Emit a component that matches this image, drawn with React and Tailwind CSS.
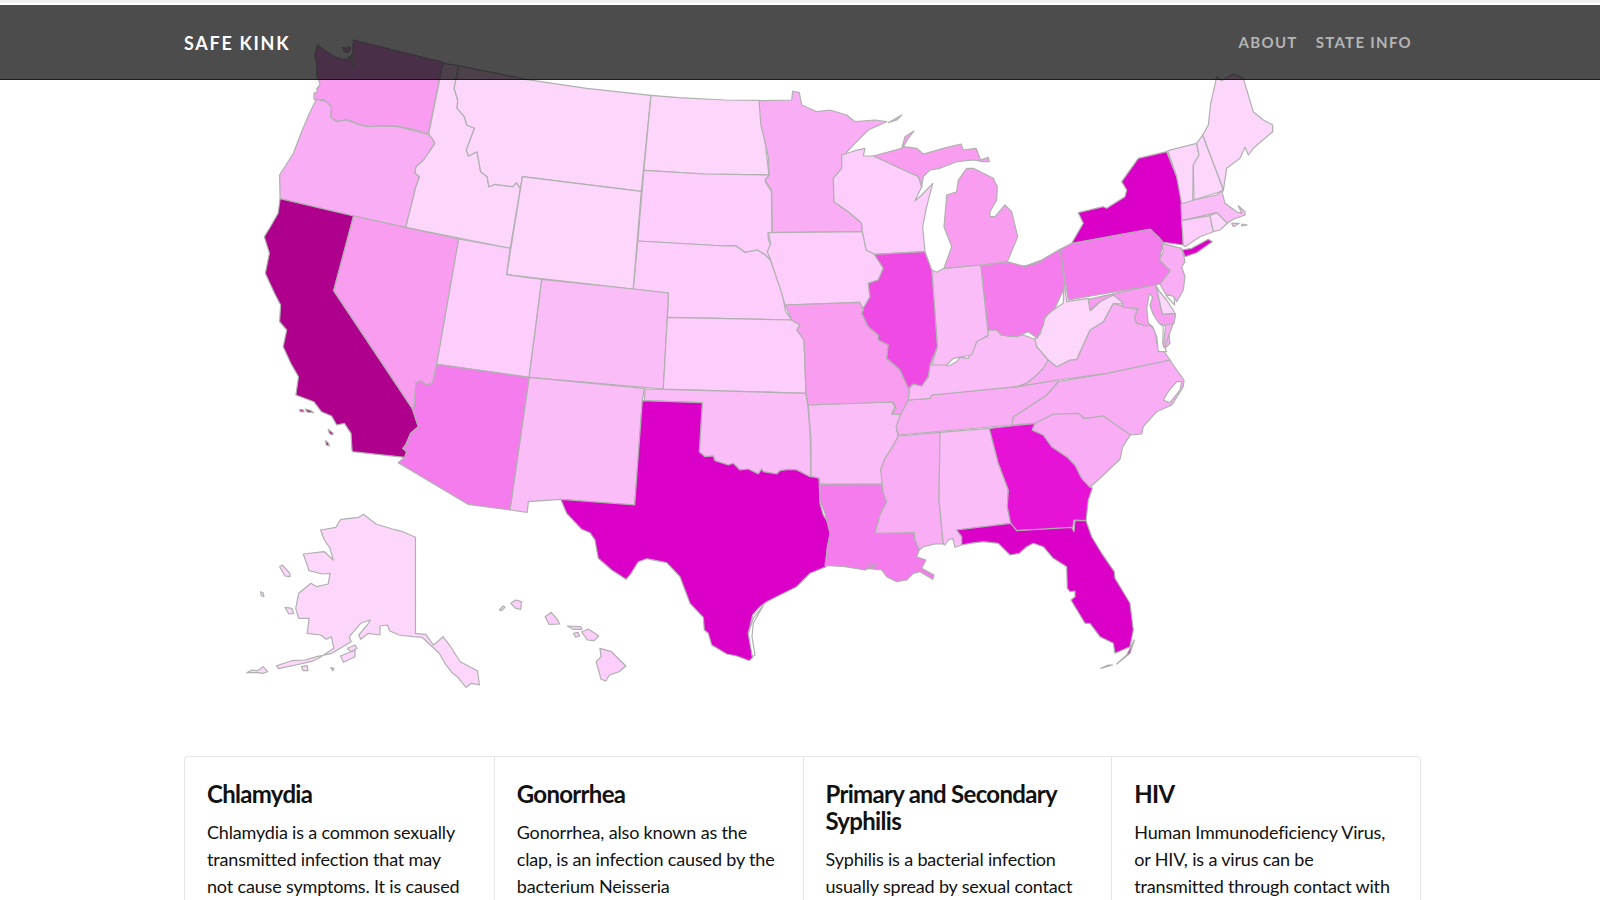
const frames = {
  a: [0, 0, 1.96, 3],
  c: [200, 400, 2.613, 3],
  d: [780, 400, 3, 3],
  e: [1000, 60, 3, 3],
  f: [740, 80, 3, 3],
  g: [780, 280, 3, 3],
  h: [540, 370, 3, 3],
  i: [300, 30, 3, 3],
};

// outlines were traced off zoomed crops, a letter switches to that crop's coordinates
const toPath = (src) => {
  let f = frames.a;
  const out = [];
  src.trim().split(/\s+/).forEach((tok) => {
    if (frames[tok]) {
      f = frames[tok];
      return;
    }
    const [x, y] = tok.split(',').map(Number);
    out.push(`${(f[0] + x / f[2]).toFixed(1)} ${(f[1] + y / f[3]).toFixed(1)}`);
  });
  return 'M' + out.join('L') + 'Z';
};

const c1 = '#ae008c';
const c2 = '#db00c8';
const c3 = '#e612d6';
const c4 = '#ef4ae3';
const c5 = '#f47cec';
const c6 = '#f89df0';
const c7 = '#f9adf5';
const c8 = '#fbbdf8';
const c9 = '#fdcdfb';
const c10 = '#fdd6fc';

const states = [
  [c6, 'i 52,45 60,50 72,60 100,78 125,88 140,88 150,85 145,80 155,92 160,108 165,110 160,88 150,80 158,72 160,30 430,97 418,150 385,312 340,298 290,288 240,287 215,292 195,285 180,285 160,275 135,268 125,275 105,272 92,262 93,235 85,222 70,208 55,212 42,208 42,190 52,185 50,175 60,165 58,155 50,135 50,100 45,75'],
  [c6, 'i 128,52 140,55 150,50 152,58 143,68 133,65'],
  [c10, 'a 868,190 899,197 890,265 897,300 896,325 910,350 915,375 930,385 914,450 918,468 935,455 942,515 955,530 958,560 970,553 1005,560 1012,548 1020,565 1000,745 795,682 815,560 822,530 813,520 815,500 830,480 852,430 848,418 840,403'],
  [c10, 'a 899,197 1030,238 1150,265 1276,286 1257,574 1024,530 1020,565 1012,548 1005,560 970,553 958,560 955,530 942,515 935,455 918,468 914,450 930,385 915,375 910,350 896,325 897,300 890,265'],
  [c10, 'a 1276,286 1330,293 1420,300 1489,301 1495,335 1492,380 1498,400 1503,470 1507,525 1380,522 1262,511'],
  [c9, 'a 1262,511 1380,522 1507,525 1500,545 1512,575 1513,697 1505,700 1506,720 1511,735 1510,780 1500,765 1485,750 1460,757 1442,737 1420,738 1250,723'],
  [c9, 'a 1250,723 1420,738 1442,737 1460,757 1485,750 1500,765 1510,780 1520,820 1532,870 1537,912 1540,935 1552,960 1308,952 1310,879 1241,867'],
  [c10, 'a 1024,530 1257,574 1241,867 993,824'],
  [c7, 'a 620,298 640,305 650,322 648,350 660,365 680,360 705,375 720,380 745,378 780,380 840,403 848,418 852,430 830,480 815,500 813,520 822,530 815,560 795,682 693,648 549,596 548,525 575,460 590,400 605,345'],
  [c1, 'a 549,596 693,648 654,872 808,1225 820,1280 805,1300 795,1335 c 545,125 530,145 540,155 535,172 398,155 a 690,1350 688,1300 675,1270 660,1275 650,1248 630,1235 615,1205 580,1185 585,1130 570,1090 555,1040 562,990 548,965 550,915 538,880 520,820 528,760 518,710 530,680 545,640'],
  [c1, 'c 260,28 270,30 272,36 262,35'],
  [c1, 'c 275,27 290,32 297,38 280,36'],
  [c1, 'c 335,88 348,100 345,105 338,100'],
  [c1, 'c 328,122 335,128 338,138 330,135'],
  [c6, 'a 693,648 899,717 856,1093 848,1150 835,1155 825,1142 815,1150 812,1222 808,1225 654,872'],
  [c9, 'a 899,717 1000,745 993,824 1062,838 1037,1132 856,1093'],
  [c8, 'a 1062,838 1241,867 1310,879 1308,952 1300,1167 1037,1132'],
  [c9, 'a 1308,952 g 35,120 60,135 50,150 72,180 78,340 a 1300,1167'],
  [c8, 'a 1037,1132 1263,1165 h 307,92 284,405 62,388 c 858,305 855,337 810,330'],
  [c5, 'a 856,1093 1037,1132 c 810,330 700,313 518,188 535,172 540,155 530,145 545,125 a 795,1335 805,1300 820,1280 808,1225 812,1222 815,1150 825,1142 835,1155 848,1150'],
  [c8, 'h 315,57 797,70 803,105 810,180 813,322 810,320 770,300 745,298 720,302 710,312 670,305 665,297 655,312 625,297 600,300 580,280 565,285 525,272 520,258 495,260 478,245 487,98 313,92'],
  [c2, 'h 307,92 487,98 478,245 495,260 520,258 525,272 565,285 580,280 600,300 625,297 655,312 665,297 670,305 710,312 720,302 745,298 770,300 810,320 837,322 840,400 850,435 865,460 872,490 862,530 858,590 810,610 770,650 720,675 680,695 660,710 638,735 625,790 635,840 638,862 628,872 590,858 560,852 515,825 505,790 493,780 490,742 450,700 420,620 380,578 320,566 295,575 270,615 258,628 215,600 175,565 165,510 150,488 125,478 80,430 62,388 284,405'],
  ['#ffffff', 'h 670,706 640,745 625,790 637,860 645,855 636,800 640,760 665,715'],
  [c8, 'd 85,15 335,6 345,20 335,40 365,42 350,90 355,108 335,145 315,175 302,210 310,240 305,252 120,253 118,235 93,228 93,120'],
  [c5, 'd 120,253 305,252 310,280 320,305 300,345 285,400 403,398 405,420 418,450 410,470 438,480 425,505 462,525 458,538 420,515 400,520 380,540 350,545 320,530 305,510 260,505 265,495 290,495 255,510 195,500 150,497 135,497 143,440 150,400 135,340 120,300'],
  [c7, 'd 355,108 480,97 477,300 490,432 465,432 430,440 418,450 405,420 403,398 285,400 300,345 320,305 310,280 302,210 315,175 335,145'],
  [c8, 'd 480,97 628,85 655,190 685,270 682,320 692,370 530,390 545,410 545,435 525,442 518,415 505,420 495,435 490,432 477,300'],
  [c3, 'd 628,85 765,70 757,90 790,105 815,140 860,170 885,195 905,235 937,265 925,300 918,362 882,360 878,385 710,392 692,370 682,320 685,270 655,190'],
  [c2, 'd 530,390 692,370 710,392 875,382 882,395 885,362 918,362 935,410 965,460 1003,515 1005,535 1050,610 1060,690 1050,740 1005,760 1000,730 960,710 930,670 915,670 885,620 873,600 885,590 885,573 870,575 862,565 860,500 820,475 790,440 760,430 740,440 718,460 690,465 655,430 610,425 570,430 545,435 545,410'],
  [c2, 'd 1063,720 1050,760 1010,792 1040,765'],
  [c2, 'd 962,805 985,795 998,795 970,803'],
  [c7, 'd 765,70 820,42 895,38 912,55 970,48 1052,103 1028,140 1020,178 960,235 930,262 905,235 885,195 860,170 815,140 790,105 757,90'],
  [c7, 'g 695,435 700,410 740,385 800,345 835,305 980,280 1170,240 1190,270 1212,300 1210,320 1185,360 1175,375 1130,395 1090,440 1085,462 1052,465 970,408 912,415 895,400 820,402 765,430'],
  ['#ffffff', 'g 1165,335 1190,305 1205,305 1200,330 1170,368 1150,360'],
  [c7, 'g 355,465 348,440 362,403 385,360 450,355 455,345 710,320 835,300 835,305 800,345 740,385 700,410 695,435'],
  [c8, 'g 385,360 388,325 400,312 425,318 445,290 450,255 480,250 505,258 530,245 540,232 565,235 575,210 595,180 622,170 625,150 650,150 665,165 690,170 730,165 765,178 770,200 805,240 790,265 765,290 740,310 710,320 455,345 450,355'],
  [c7, 'g 740,310 765,290 790,265 805,240 830,260 870,240 890,238 930,150 970,125 1000,70 1035,80 1075,90 1065,125 1110,135 1125,150 1130,190 1150,210 1170,240 980,280 835,300 710,320'],
  [c7, 'g 1150,195 1165,145 1170,190 1155,205'],
  [c10, 'g 765,178 782,160 785,130 805,100 850,70 852,0 860,65 925,55 932,92 965,60 1000,45 1028,58 1030,72 1000,70 970,125 930,150 890,238 870,240 830,260 805,240 770,200'],
  [c6, 'e 265,718 467,673 487,762 527,762 522,790 495,797 478,790 462,795 440,798 410,790 403,770 415,745 370,742 365,725 340,705 300,725 270,750'],
  ['#ffffff', 'e 448,700 458,712 450,735 458,760 470,780 478,790 490,800 488,850 500,875 475,875 470,830 458,800 445,790 440,745'],
  [c7, 'e 490,860 497,795 520,790 505,830 495,860'],
  [c10, 'e 467,673 475,690 500,720 525,760 487,762'],
  ['#ffffff', 'e 497,705 522,708 524,735'],
  [c7, 'e 485,550 545,565 555,605 545,620 555,650 550,690 530,725 522,710 495,700 480,672 510,632 478,600 490,575'],
  [c5, 'e 215,550 450,507 475,530 490,547 478,600 510,632 480,672 205,720 180,568'],
  [c2, 'e 215,550 250,490 235,458 310,440 320,445 375,410 380,390 365,365 415,295 500,275 530,350 543,400 550,555 490,547 475,530 450,507'],
  [c2, 'e 547,570 555,590 590,578 637,545 625,538 575,565'],
  [c10, 'e 503,272 590,250 597,285 580,315 578,425 545,432 530,350'],
  [c10, 'e 590,250 608,225 665,375 670,392 582,420 580,315 597,285'],
  [c10, 'e 608,225 625,195 632,130 650,50 665,62 700,42 730,55 760,155 790,180 818,195 818,215 760,265 745,285 735,262 720,295 680,325 670,392 665,375'],
  [c8, 'e 543,432 582,420 650,405 665,392 675,430 710,455 725,460 715,437 735,455 735,465 700,478 682,490 650,458 545,482'],
  [c9, 'e 545,482 630,467 640,515 600,530 555,560 550,555'],
  [c10, 'e 630,467 650,458 682,490 660,510 640,515'],
  [c8, 'e 695,490 718,490 700,500'],
  [c8, 'e 725,492 742,495 725,498'],
  [c5, 'f 722,558 800,545 850,558 900,548 e 70,620 125,600 180,568 192,660 190,690 165,745 135,770 130,795 112,835 85,815 50,830 0,825 g 665,165 650,150 625,150'],
  [c8, 'f 575,570 590,577 612,565 722,555 745,765 710,785 695,825 640,835 620,855 575,855 592,800 585,700'],
  [c6, 'f 612,565 635,500 612,440 620,345 650,335 655,300 680,265 700,265 760,295 772,320 770,360 750,395 750,410 765,410 795,375 815,395 833,470 825,490 802,545 722,555'],
  [c6, 'f 400,228 485,205 495,170 522,153 505,175 490,200 530,205 550,222 610,205 663,192 670,210 708,205 722,240 745,232 748,245 730,245 700,240 650,245 600,265 570,270 550,290 545,320 535,290'],
  [c7, 'f 57,62 155,60 158,33 178,38 185,75 230,95 270,90 320,105 345,125 405,120 440,125 385,150 345,190 315,222 305,225 305,265 280,295 282,365 325,395 365,430 367,455 97,458 95,330 75,300 88,285 85,230 62,130'],
  [c7, 'f 445,128 485,105 470,120'],
  [c9, 'f 305,225 345,212 375,205 370,228 400,228 535,290 545,320 525,362 545,345 578,310 560,380 548,440 555,515 403,523 378,510 372,480 367,455 365,430 325,395 282,365 280,295 305,265'],
  [c9, 'f 85,458 367,455 372,480 378,510 403,523 430,565 415,600 385,610 390,650 370,685 355,667 135,675 125,640 90,535 82,515 92,490'],
  [c6, 'g 15,75 240,67 250,90 245,100 265,140 295,165 295,180 325,195 320,235 360,270 385,325 388,325 385,360 362,403 335,403 348,385 340,366 85,375 78,340 72,180 50,150 60,135 35,120'],
  [c4, 'f 403,523 555,515 575,570 585,700 592,800 g 450,255 445,290 425,318 400,312 385,325 360,270 320,235 325,195 295,180 295,165 265,140 245,100 250,90 f 370,685 390,650 385,610 415,600 430,565'],
  // hawaii
  [c9, 'c 812,610 825,600 840,605 838,628 825,625'],
  [c9, 'c 782,630 792,618 797,622 788,632'],
  [c9, 'c 902,650 918,637 935,660 940,672 912,673'],
  [c9, 'c 960,678 995,680 998,688 975,688'],
  [c9, 'c 976,700 988,697 992,708 982,712'],
  [c9, 'c 997,695 1015,687 1042,708 1030,722 1012,720'],
  [c9, 'c 1045,745 1075,755 1113,798 1095,815 1070,825 1060,843 1048,838 1035,785 1048,770'],
  // alaska
  [c10, 'c 315,390 355,382 368,358 415,352 427,343 460,372 505,388 530,395 563,412 563,700 590,703 610,735 620,725 635,710 655,740 680,785 725,812 730,855 710,850 695,862 672,830 660,820 640,790 625,760 580,712 555,710 520,705 495,692 490,675 470,678 470,705 440,700 420,718 415,705 440,670 445,660 420,670 390,710 395,725 345,760 305,770 275,780 240,782 200,797 205,806 250,795 290,785 310,775 350,745 343,710 330,718 315,705 280,700 285,655 258,655 250,625 258,580 290,550 305,560 335,552 340,520 320,522 285,512 270,462 325,455 348,480 340,445 325,420'],
  [c10, 'c 367,768 405,750 405,770 375,787'],
  [c10, 'c 385,745 405,735 410,745 395,755'],
  [c10, 'c 222,622 240,625 245,640 232,642'],
  [c10, 'c 208,500 215,495 235,520 235,530 222,528'],
  [c10, 'c 158,575 165,578 167,590 160,587'],
  [c10, 'c 122,818 135,810 150,812 165,800 177,815 165,820 150,818'],
  [c10, 'c 265,800 280,797 282,812 270,812'],
  [c10, 'c 342,803 350,805 347,812'],
];

const cards = [
  {
    title: 'Chlamydia',
    body: 'Chlamydia is a common sexually transmitted infection that may not cause symptoms. It is caused',
  },
  {
    title: 'Gonorrhea',
    body: 'Gonorrhea, also known as the clap, is an infection caused by the bacterium Neisseria',
  },
  {
    title: 'Primary and Secondary Syphilis',
    body: 'Syphilis is a bacterial infection usually spread by sexual contact',
  },
  {
    title: 'HIV',
    body: 'Human Immunodeficiency Virus, or HIV, is a virus can be transmitted through contact with',
  },
];

export default function App() {
  return (
    <div className="relative h-[900px] overflow-hidden bg-white font-['Lato',sans-serif] text-[#111]">
      <div className="h-[5px] border-t-[3px] border-[#eeeeee] bg-white" />

      <nav className="absolute left-0 right-0 top-[5px] z-10 flex h-[75px] items-center justify-between border-b border-black/60 bg-black/70 pl-[184px] pr-[188px] uppercase">
        <a className="pt-0.5 text-[18px] font-bold tracking-[1.7px] text-white">Safe Kink</a>
        <div className="flex gap-[18px] text-[15px] font-bold tracking-[1.3px] text-[#b4b4b4]">
          <a>About</a>
          <a>State Info</a>
        </div>
      </nav>

      <svg className="block h-[751px] w-full" viewBox="0 5 1600 751">
        {states.map(([fill, src], i) => (
          <path key={i} d={toPath(src)} fill={fill} stroke="#b0b0b0" strokeWidth="1.2" strokeLinejoin="round" />
        ))}
      </svg>

      <div className="ml-[184px] grid w-[1237px] grid-cols-4 rounded border border-[#e4e4e4]">
        {cards.map((card, i) => (
          <div key={card.title} className={`pb-6 pl-[22px] pr-[24px] pt-[23px] ${i > 0 ? 'border-l border-[#e4e4e4]' : ''}`}>
            <h4 className="mb-3 text-[24px] font-bold leading-[27px] tracking-[-0.7px]">{card.title}</h4>
            <p className="text-[18px] leading-[27px] tracking-[-0.17px]">{card.body}</p>
          </div>
        ))}
      </div>
    </div>
  );
}
